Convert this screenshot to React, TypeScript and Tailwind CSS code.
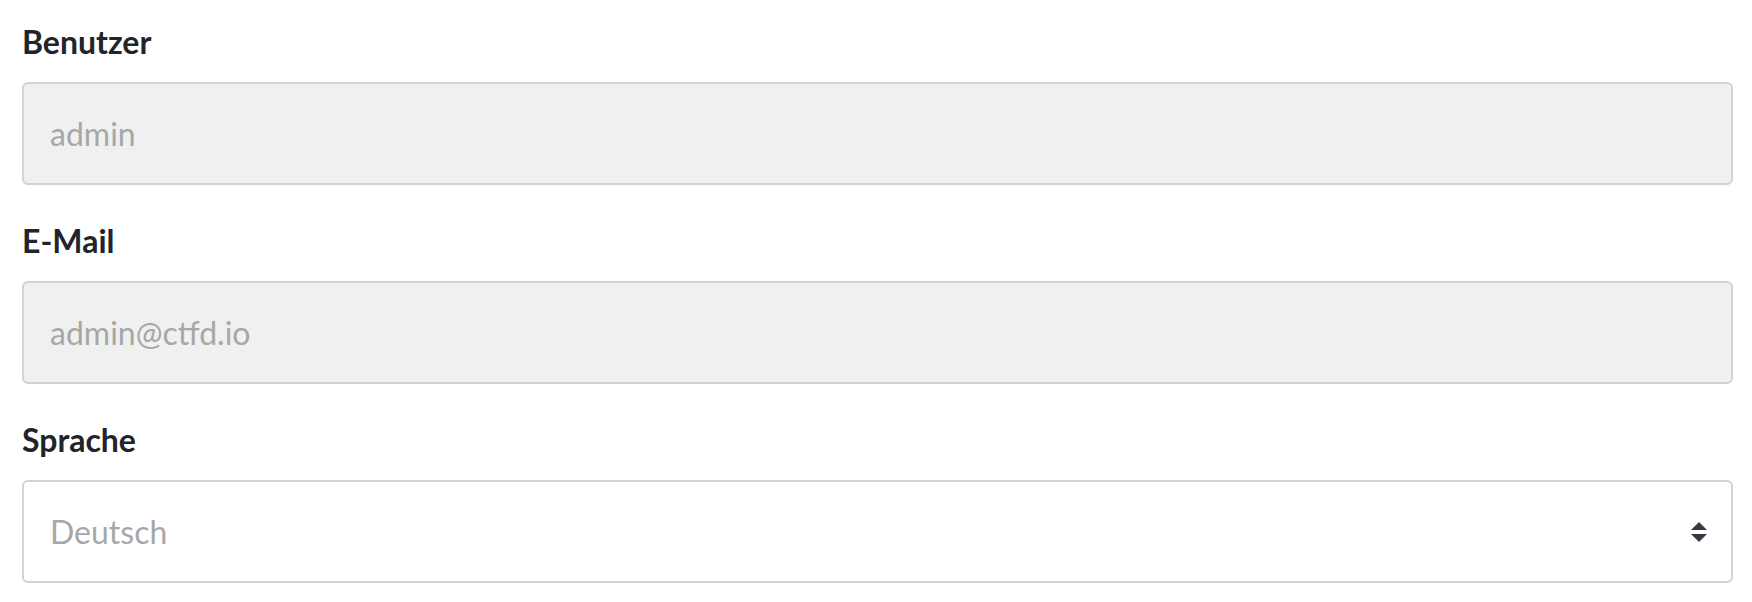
import React from 'react';

function Field({ label, children, last }: { label: string; children: React.ReactNode; last?: boolean }) {
  return (
    <div className={last ? '' : 'mb-[33px]'}>
      <label className="block text-[32px] font-bold leading-[46px] text-[#212529] mb-[17px]">{label}</label>
      {children}
    </div>
  );
}

export default function App() {
  return (
    <div className="min-h-screen bg-white pl-[22px] pr-[19px] pt-[19px] font-['Lato',sans-serif]">
      <Field label="Benutzer">
        <div className="flex h-[103px] items-center rounded-[6px] border-2 border-[#ced4da] bg-[#f0f0f0] px-[26px] text-[32px] text-[#a7a7a7]">
          admin
        </div>
      </Field>

      <Field label="E-Mail">
        <div className="flex h-[103px] items-center rounded-[6px] border-2 border-[#ced4da] bg-[#f0f0f0] px-[26px] text-[32px] text-[#a7a7a7]">
          admin@ctfd.io
        </div>
      </Field>

      <Field label="Sprache" last>
        <div className="flex h-[103px] items-center justify-between rounded-[6px] border-2 border-[#ced4da] bg-white pl-[26px] pr-[24px] text-[32px] text-[#a7a7a7]">
          <span>Deutsch</span>
          {/* up/down caret */}
          <svg width="16" height="20" viewBox="0 0 16 20" className="text-[#343a40]">
            <polygon points="8,0 16,8 0,8" fill="currentColor" />
            <polygon points="0,12 16,12 8,20" fill="currentColor" />
          </svg>
        </div>
      </Field>
    </div>
  );
}
